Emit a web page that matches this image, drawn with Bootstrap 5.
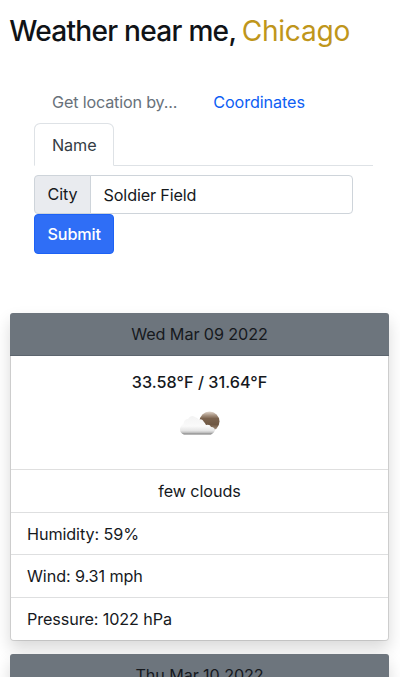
<!DOCTYPE html>
<html lang="en">
<head>
<meta charset="utf-8">
<meta name="viewport" content="width=device-width, initial-scale=1">
<title>Weather near me</title>
<link href="https://cdn.jsdelivr.net/npm/bootstrap@5.3.0/dist/css/bootstrap.min.css" rel="stylesheet">
<style>
html { font-size: 16.6px; }
body { font-family: Inter, "Liberation Sans", sans-serif; color: #16191d; font-size: 16.2px; line-height: 25px; letter-spacing: -.1px; height: 677px; overflow: hidden; }
.page { padding: 13px 11px 0 10px; height: 677px; overflow: hidden; }
.page-title { font-size: 28.1px; line-height: 34px; font-weight: 500; letter-spacing: -.74px; margin: 0 0 0 -.8px; padding-top: .5px; height: 34px; color: #101317; white-space: nowrap; }
.place { color: #bf961b; font-weight: 400; letter-spacing: -.25px; margin-left: -1px; }
.finder { padding: 34px 16px 59px 24px; }
.nav-tabs { --bs-nav-tabs-border-color: #dee2e6; --bs-nav-link-color: #0d5ef4; height: 85px; }
.nav-tabs .nav-link { padding: 8px 17px; }
.nav-tabs .nav-link.disabled { color: #68717a; }
.nav-tabs .nav-link.active { color: #343c45; padding: 9px 16.5px 7px 17px; }
.nav-tabs .t-get { letter-spacing: -.18px; }
.city-group { width: 319px; margin-top: 9px; }
.city-group .input-group-text, .city-group .form-control { font-size: 16.2px; line-height: 25px; height: 39px; padding: 6px 12.5px; border-radius: 4px; color: #16191d; letter-spacing: inherit; border-color: #ced4da; }
.city-group .form-control { letter-spacing: -.15px; }
.city-group .input-group-text { background: #e9ebef; border-radius: 4px 0 0 4px; }
.city-group .form-control { border-radius: 0 4px 4px 0; }
.send { font-size: 16.2px; line-height: 25px; font-weight: 500; padding: 6px 12.5px; border-radius: 4px; letter-spacing: -.15px; background: #2f6ef6; border-color: #1d62f5; display: block; height: 40px; }
.day { border: 1px solid rgba(0,0,0,.125); background-clip: padding-box; border-radius: 4px; margin-bottom: 13px; box-shadow: 0 8px 16px rgba(0,0,0,.15); }
.day .card-header { background: #6d757d; color: #16191d; padding: 9px 16px 7px; height: 43px; line-height: 25px; margin: -1px -1px 0; border-radius: 3px 3px 0 0; border-color: #5c656e; }
.day .card-body { height: 113px; padding: 14px 16px 0; flex: none; }
.temps { font-weight: 500; letter-spacing: .03px; }
.day .list-group-item { height: 42.6px; padding: 9px 16px 7px; color: #16191d; border-color: #dedfe0; }
.day .list-group-item:last-child { height: 42px; }
.sky { display: block; margin: 9px auto 0; }
</style>
</head>
<body>
<div class="page">
  <h1 class="page-title">Weather near me, <span class="place">Chicago</span></h1>
  <section class="finder">
    <ul class="nav nav-tabs">
      <li class="nav-item"><a class="nav-link disabled t-get">Get location by...</a></li>
      <li class="nav-item"><a class="nav-link" href="#">Coordinates</a></li>
      <li class="nav-item"><a class="nav-link active" href="#">Name</a></li>
    </ul>
    <form>
      <div class="input-group city-group">
        <span class="input-group-text">City</span>
        <input class="form-control" type="text" value="Soldier Field" aria-label="City">
      </div>
      <button class="btn btn-primary send" type="button">Submit</button>
    </form>
  </section>
  <article class="card day">
    <div class="card-header text-center">Wed Mar 09 2022</div>
    <div class="card-body text-center">
      <div class="temps">33.58°F / 31.64°F</div>
      <svg class="sky" width="50" height="34" viewBox="0 0 50 34" aria-hidden="true">
        <defs>
          <linearGradient id="sun" x1="0" y1="0" x2="0" y2="1"><stop offset="0" stop-color="#e2d7cd"/><stop offset=".2" stop-color="#a4907e"/><stop offset=".35" stop-color="#7b634e"/><stop offset=".65" stop-color="#6f5843"/><stop offset="1" stop-color="#b39f8c"/></linearGradient>
          <linearGradient id="cloud" x1="0" y1="0" x2="0" y2="1"><stop offset="0" stop-color="#f3f3f3"/><stop offset=".55" stop-color="#fafafa"/><stop offset=".8" stop-color="#e4e4e4"/><stop offset=".92" stop-color="#b8b8b8"/><stop offset="1" stop-color="#707070"/></linearGradient>
        </defs>
        <circle cx="34.500" cy="17.500" r="10" fill="url(#sun)"/>
        <path d="M9 30.500Q5 29 5 25.500Q5 22 8.500 20Q9 15 13 15Q16 10 20 13Q23 14 24 16Q27 14 29 18Q30 19 31 21Q35 20 36 23Q40 23 40 26.500Q39 29 36 30.500Z" fill="url(#cloud)"/>
      </svg>
    </div>
    <ul class="list-group list-group-flush">
      <li class="list-group-item text-center">few clouds</li>
      <li class="list-group-item">Humidity: 59%</li>
      <li class="list-group-item">Wind: 9.31 mph</li>
      <li class="list-group-item">Pressure: 1022 hPa</li>
    </ul>
  </article>
  <article class="card day">
    <div class="card-header text-center">Thu Mar 10 2022</div>
    <div class="card-body"></div>
  </article>
</div>
<script src="https://cdn.jsdelivr.net/npm/bootstrap@5.3.0/dist/js/bootstrap.bundle.min.js"></script>
</body>
</html>
